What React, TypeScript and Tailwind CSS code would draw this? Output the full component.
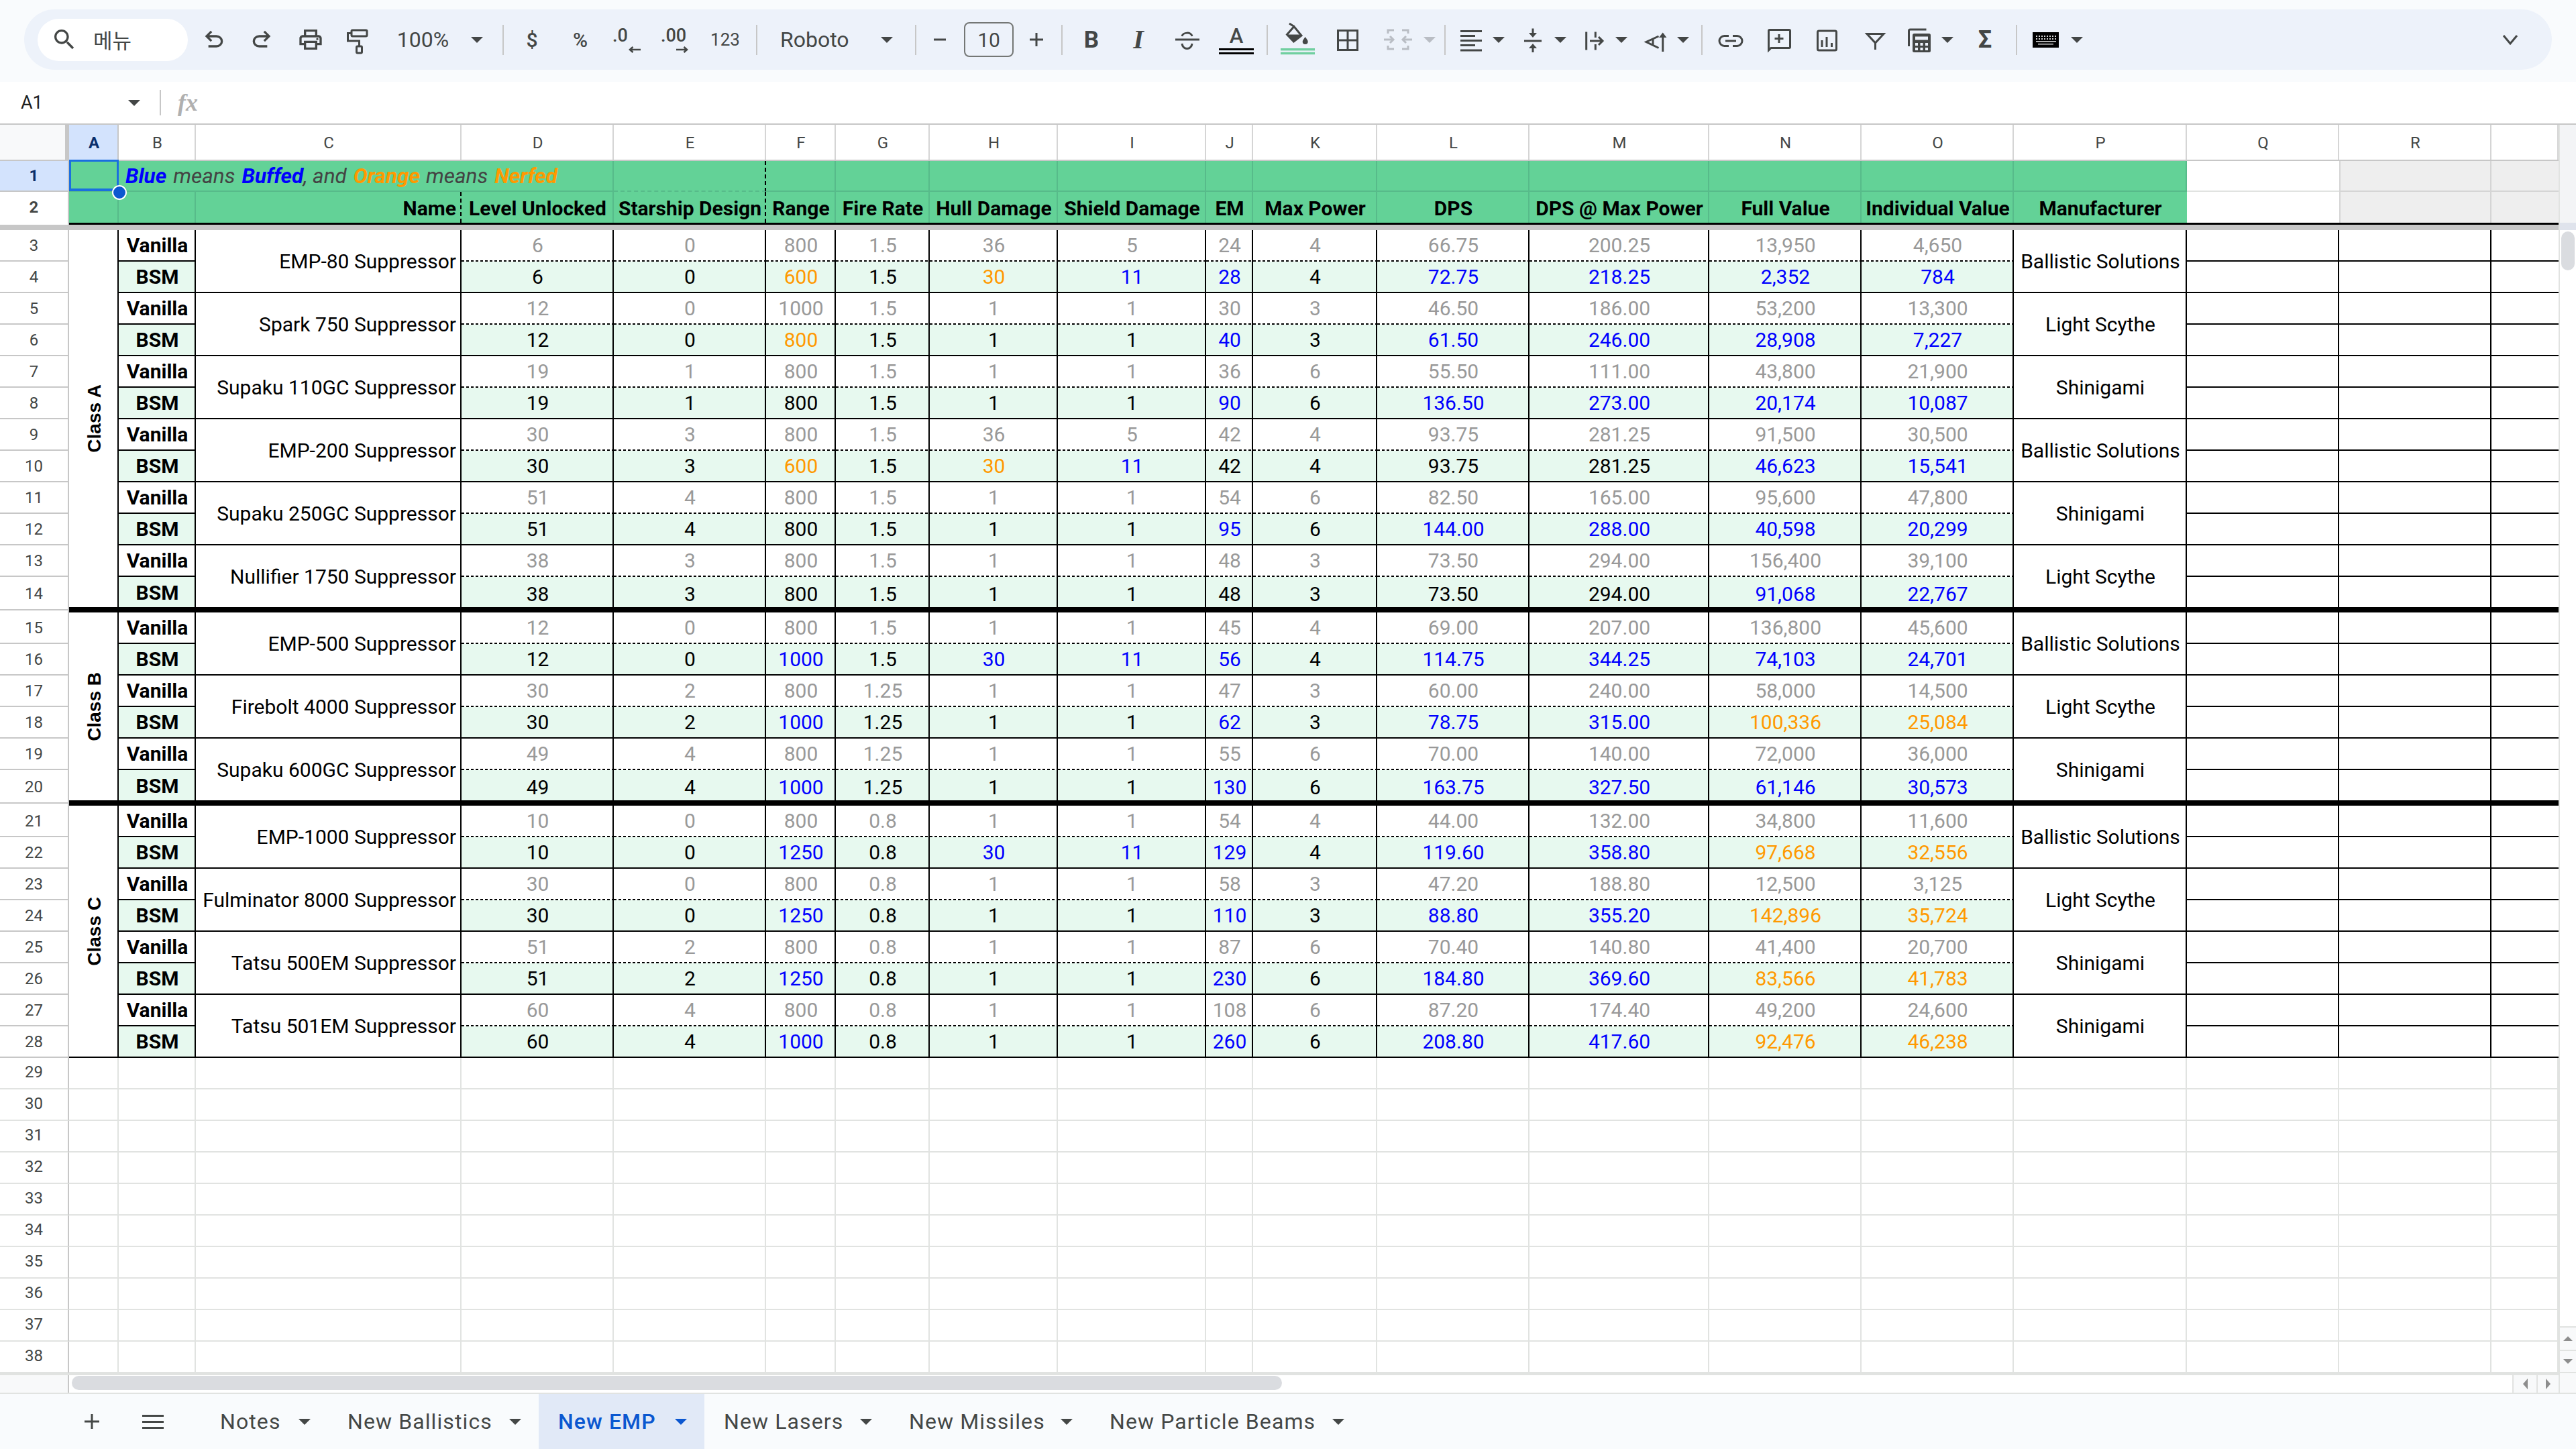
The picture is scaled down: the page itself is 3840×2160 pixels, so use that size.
import type { ReactNode } from "react";

const GRID =
  "grid grid-cols-[103px_74px_115px_396px_227px_227px_104px_140px_191px_221px_70px_185px_227px_268px_227px_227px_258px_227px_227px_100px]";

const COL_LETTERS = "ABCDEFGHIJKLMNOPQRS".split("");

const HEADERS = [
  "Level Unlocked",
  "Starship Design",
  "Range",
  "Fire Rate",
  "Hull Damage",
  "Shield Damage",
  "EM",
  "Max Power",
  "DPS",
  "DPS @ Max Power",
  "Full Value",
  "Individual Value",
];

// suffix b = blue (buffed), o = orange (nerfed)
const SECTIONS = [
  {
    label: "Class A",
    span: "row-span-12",
    items: [
      ["EMP-80 Suppressor", "Ballistic Solutions", "6 0 800 1.5 36 5 24 4 66.75 200.25 13,950 4,650", "6 0 600o 1.5 30o 11b 28b 4 72.75b 218.25b 2,352b 784b"],
      ["Spark 750 Suppressor", "Light Scythe", "12 0 1000 1.5 1 1 30 3 46.50 186.00 53,200 13,300", "12 0 800o 1.5 1 1 40b 3 61.50b 246.00b 28,908b 7,227b"],
      ["Supaku 110GC Suppressor", "Shinigami", "19 1 800 1.5 1 1 36 6 55.50 111.00 43,800 21,900", "19 1 800 1.5 1 1 90b 6 136.50b 273.00b 20,174b 10,087b"],
      ["EMP-200 Suppressor", "Ballistic Solutions", "30 3 800 1.5 36 5 42 4 93.75 281.25 91,500 30,500", "30 3 600o 1.5 30o 11b 42 4 93.75 281.25 46,623b 15,541b"],
      ["Supaku 250GC Suppressor", "Shinigami", "51 4 800 1.5 1 1 54 6 82.50 165.00 95,600 47,800", "51 4 800 1.5 1 1 95b 6 144.00b 288.00b 40,598b 20,299b"],
      ["Nullifier 1750 Suppressor", "Light Scythe", "38 3 800 1.5 1 1 48 3 73.50 294.00 156,400 39,100", "38 3 800 1.5 1 1 48 3 73.50 294.00 91,068b 22,767b"],
    ],
  },
  {
    label: "Class B",
    span: "row-span-6",
    items: [
      ["EMP-500 Suppressor", "Ballistic Solutions", "12 0 800 1.5 1 1 45 4 69.00 207.00 136,800 45,600", "12 0 1000b 1.5 30b 11b 56b 4 114.75b 344.25b 74,103b 24,701b"],
      ["Firebolt 4000 Suppressor", "Light Scythe", "30 2 800 1.25 1 1 47 3 60.00 240.00 58,000 14,500", "30 2 1000b 1.25 1 1 62b 3 78.75b 315.00b 100,336o 25,084o"],
      ["Supaku 600GC Suppressor", "Shinigami", "49 4 800 1.25 1 1 55 6 70.00 140.00 72,000 36,000", "49 4 1000b 1.25 1 1 130b 6 163.75b 327.50b 61,146b 30,573b"],
    ],
  },
  {
    label: "Class C",
    span: "row-span-8",
    items: [
      ["EMP-1000 Suppressor", "Ballistic Solutions", "10 0 800 0.8 1 1 54 4 44.00 132.00 34,800 11,600", "10 0 1250b 0.8 30b 11b 129b 4 119.60b 358.80b 97,668o 32,556o"],
      ["Fulminator 8000 Suppressor", "Light Scythe", "30 0 800 0.8 1 1 58 3 47.20 188.80 12,500 3,125", "30 0 1250b 0.8 1 1 110b 3 88.80b 355.20b 142,896o 35,724o"],
      ["Tatsu 500EM Suppressor", "Shinigami", "51 2 800 0.8 1 1 87 6 70.40 140.80 41,400 20,700", "51 2 1250b 0.8 1 1 230b 6 184.80b 369.60b 83,566o 41,783o"],
      ["Tatsu 501EM Suppressor", "Shinigami", "60 4 800 0.8 1 1 108 6 87.20 174.40 49,200 24,600", "60 4 1000b 0.8 1 1 260b 6 208.80b 417.60b 92,476o 46,238o"],
    ],
  },
];

const TABS = [
  { name: "Notes", w: "w-[190px]" },
  { name: "New Ballistics", w: "w-[314px]" },
  { name: "New EMP", w: "w-[247px]", active: true },
  { name: "New Lasers", w: "w-[276px]" },
  { name: "New Missiles", w: "w-[299px]" },
  { name: "New Particle Beams", w: "w-[405px]" },
];

function Box({ ml, children }: { ml: string; children: ReactNode }) {
  return <div className={`flex h-[44px] w-[44px] shrink-0 items-center justify-center ${ml}`}>{children}</div>;
}

function Caret({ ml = "", color = "fill-[#444746]" }: { ml?: string; color?: string }) {
  return (
    <svg viewBox="0 0 18 9" className={`h-[9px] w-[18px] shrink-0 ${color} ${ml}`}>
      <path d="M0 0h18L9 9z" />
    </svg>
  );
}

function Sep({ ml }: { ml: string }) {
  return <div className={`h-[45px] w-[2px] shrink-0 bg-[#c7c7c7] ${ml}`} />;
}

function Ico({ children, vb = "0 0 44 44" }: { children: ReactNode; vb?: string }) {
  return (
    <svg viewBox={vb} className="h-[44px] w-[44px] fill-none stroke-[#444746] stroke-[3]">
      {children}
    </svg>
  );
}

function Solid({ d, vb = "0 0 24 24" }: { d: string; vb?: string }) {
  return (
    <svg viewBox={vb} className="h-[40px] w-[40px] fill-[#444746]">
      <path d={d} />
    </svg>
  );
}

function DecimalIcon({ label, ml, arrowMl, dir }: { label: string; ml: string; arrowMl: string; dir: "l" | "r" }) {
  return (
    <div className={`flex w-[44px] shrink-0 flex-col items-start ${ml}`}>
      <div className="h-[26px] text-[27px] font-medium leading-[26px]">{label}</div>
      <svg viewBox="0 0 18 10" className={`mt-[3px] h-[10px] w-[18px] fill-none stroke-[#444746] stroke-[2.6] ${arrowMl}`}>
        {dir === "l" ? <path d="M18 5H2M6.5 1 2 5l4.5 4" /> : <path d="M0 5h16M11.5 1 16 5l-4.5 4" />}
      </svg>
    </div>
  );
}

function Toolbar() {
  return (
    <div className="h-[122px] shrink-0 bg-[#f9fbfd] px-[36px] pt-[14px]">
      <div className="flex h-[90px] items-center rounded-[45px] bg-[#edf2fa] pl-[20px] text-[#444746]">
        <div className="flex h-[63px] w-[224px] shrink-0 items-center rounded-[32px] bg-white pl-[20px]">
          <Solid d="M15.5 14h-.79l-.28-.27C15.41 12.59 16 11.11 16 9.5 16 5.91 13.09 3 9.5 3S3 5.91 3 9.5 5.91 16 9.5 16c1.61 0 3.09-.59 4.23-1.57l.27.28v.79l5 4.99L20.49 19l-4.99-5zm-6 0C7.01 14 5 11.99 5 9.5S7.01 5 9.5 5 14 7.01 14 9.5 11.99 14 9.5 14z" />
          <span className="ml-[23px] font-[family-name:'Noto_Sans_CJK_KR',sans-serif] text-[31px]">메뉴</span>
        </div>
        <Box ml="ml-[17px]">
          <Solid vb="0 -960 960 960" d="M280-200v-80h284q63 0 109.5-40T720-420q0-60-46.5-100T564-560H312l104 104-56 56-200-200 200-200 56 56-104 104h252q97 0 166.5 63T800-420q0 94-69.5 157T564-200H280Z" />
        </Box>
        <Box ml="ml-[27px]">
          <Solid vb="0 -960 960 960" d="M396-200q-97 0-166.5-63T160-420q0-94 69.5-157T396-640h252L544-744l56-56 200 200-200 200-56-56 104-104H396q-63 0-109.5 40T240-420q0 60 46.5 100T396-280h284v80H396Z" />
        </Box>
        <Box ml="ml-[29px]">
          <Solid d="M19 8h-1V3H6v5H5c-1.66 0-3 1.34-3 3v6h4v4h12v-4h4v-6c0-1.66-1.34-3-3-3zM8 5h8v3H8V5zm8 12v2H8v-4h8v2zm2-2v-2H6v2H4v-4c0-.55.45-1 1-1h14c.55 0 1 .45 1 1v4h-2zM18 10.5a1 1 0 1 0 0 2 1 1 0 0 0 0-2z" />
        </Box>
        <Box ml="ml-[25px]">
          <Ico>
            <rect x="14" y="8" width="23" height="9" rx="1.5" />
            <path d="M14 12.5H8.5V24H25.5V32" />
            <rect x="21.5" y="32" width="8" height="10" rx="1.5" />
          </Ico>
        </Box>
        <div className="ml-[36px] w-[81px] shrink-0 text-center text-[32px] leading-none">100%</div>
        <Caret ml="ml-[31px]" />
        <Sep ml="ml-[29px]" />
        <div className="ml-[27px] w-[30px] shrink-0 text-center text-[30px] font-medium">$</div>
        <div className="ml-[32px] w-[50px] shrink-0 text-center text-[30px] font-medium">%</div>
        <DecimalIcon label=".0" ml="ml-[23px]" arrowMl="ml-[24px]" dir="l" />
        <DecimalIcon label=".00" ml="ml-[28px]" arrowMl="ml-[23px]" dir="r" />
        <div className="ml-[27px] w-[50px] shrink-0 text-center text-[26px]">123</div>
        <Sep ml="ml-[21px]" />
        <div className="ml-[34px] w-[106px] shrink-0 text-[32px] leading-none">Roboto</div>
        <Caret ml="ml-[44px]" />
        <Sep ml="ml-[33px]" />
        <svg viewBox="0 0 30 30" className="ml-[20px] h-[30px] w-[30px] shrink-0 stroke-[#444746] stroke-[3]">
          <path d="M6 15h18" />
        </svg>
        <div className="ml-[21px] flex h-[52px] w-[74px] shrink-0 items-center justify-center rounded-[8px] border-2 border-[#747775] text-[30px]">10</div>
        <svg viewBox="0 0 30 30" className="ml-[19px] h-[30px] w-[30px] shrink-0 stroke-[#444746] stroke-[3]">
          <path d="M5 15h20M15 5v20" />
        </svg>
        <Sep ml="ml-[22px]" />
        <Box ml="ml-[21px]">
          <span className="text-[35px] font-bold leading-none">B</span>
        </Box>
        <Box ml="ml-[26px]">
          <span className="font-[family-name:'Liberation_Serif',serif] text-[40px] font-bold italic leading-none">I</span>
        </Box>
        <Box ml="ml-[28px]">
          <Ico>
            <path d="M5 22h36M15 17c1-6 14-7 15 0M15 28c1 10 14 10 15 0" />
          </Ico>
        </Box>
        <div className="ml-[26px] flex w-[52px] shrink-0 flex-col items-center">
          <span className="h-[34px] text-[31px] font-medium leading-[34px]">A</span>
          <div className="mt-[1px] h-[3px] w-full bg-black" />
          <div className="mt-[3px] h-[3px] w-full bg-black" />
        </div>
        <Sep ml="ml-[19px]" />
        <svg viewBox="0 0 51 58" className="ml-[19px] h-[58px] w-[51px] shrink-0">
          <path d="M13 5l7 4.5M20 9.5 9.5 21.5 19.5 32 31 23z" className="fill-none stroke-[#444746] stroke-[3]" />
          <path d="M10 21.5h20.5L19.5 32z" className="fill-[#444746]" />
          <path d="M36.7 25c-2 3-4 5-4 7a4 4 0 0 0 8 0c0-2-2-4-4-7z" className="fill-[#444746]" />
          <rect x="0" y="42" width="51" height="3.4" className="fill-[#71cfa0]" />
          <rect x="0" y="47.8" width="51" height="3.4" className="fill-[#71cfa0]" />
        </svg>
        <Box ml="ml-[27px]">
          <Ico>
            <path d="M7.5 8.5h29v29h-29zM22 8.5v29M7.5 23h29" />
          </Ico>
        </Box>
        <Box ml="ml-[31px]">
          <svg viewBox="0 0 44 44" className="h-[44px] w-[44px] fill-none stroke-[#b9bdc4] stroke-[3]">
            <path d="M7 13V8h9M28 8h9v5M7 31v5h9M28 36h9v-5M1 22h14M10 17l5 5-5 5M43 22H29M34 17l-5 5 5 5" />
          </svg>
        </Box>
        <Caret ml="ml-[16px]" color="fill-[#b9bdc4]" />
        <Sep ml="ml-[13px]" />
        <Box ml="ml-[16px]">
          <Ico>
            <path d="M6 9.5h32M6 16.5h22M6 23.5h32M6 30.5h22M6 38h32" />
          </Ico>
        </Box>
        <Caret ml="ml-[10px]" />
        <Box ml="ml-[20px]">
          <Ico>
            <path d="M9 24h26M22 5.5v10M22 31v10" />
            <path d="M16 12h12l-6 7zM16 35h12l-6-7z" className="fill-[#444746] stroke-none" />
          </Ico>
        </Box>
        <Caret ml="ml-[10px]" />
        <Box ml="ml-[20px]">
          <Ico>
            <path d="M9.7 10.5v27M23.3 10.5V19M23.3 29v8.5M15 24h18M28 18l6 6-6 6" />
          </Ico>
        </Box>
        <Caret ml="ml-[9px]" />
        <Box ml="ml-[19px]">
          <Ico>
            <path d="M27.5 17 9 25.5l18.5 9M19 21v9M33.7 40V13" />
            <path d="M28 19l5.7-7.5L39.4 19z" className="fill-[#444746] stroke-none" />
          </Ico>
        </Box>
        <Caret ml="ml-[11px]" />
        <Sep ml="ml-[18px]" />
        <Box ml="ml-[20px]">
          <Ico>
            <path d="M19 16.5h-6.5a7.5 7.5 0 0 0 0 15H19M25 16.5h6.5a7.5 7.5 0 0 1 0 15H25M14 24h16" />
          </Ico>
        </Box>
        <Box ml="ml-[28px]">
          <Ico>
            <path d="M6.5 38V9a1.5 1.5 0 0 1 1.5-1.5h29A1.5 1.5 0 0 1 38.5 9v24a1.5 1.5 0 0 1-1.5 1.5H10z" />
            <path d="M22 14v13M15.5 20.5h13" />
          </Ico>
        </Box>
        <Box ml="ml-[27px]">
          <Ico>
            <rect x="8.5" y="9" width="28" height="29" rx="2" />
            <path d="M15 23v10M22 18v15M29.5 27v6" />
          </Ico>
        </Box>
        <Box ml="ml-[28px]">
          <Ico>
            <path d="M10 13.5h25L22.5 27zM22.5 27v10" />
          </Ico>
        </Box>
        <Box ml="ml-[22px]">
          <Ico>
            <path d="M6.5 32V9a2 2 0 0 1 2-2h24" />
            <rect x="12" y="13" width="27" height="28" rx="2.5" className="fill-[#444746] stroke-none" />
            <rect x="16" y="17.5" width="19" height="5" className="fill-[#edf2fa] stroke-none" />
            <path d="M16 27h4v4h-4zM23.5 27h4v4h-4zM31 27h4v4h-4zM16 34h4v4h-4zM23.5 34h4v4h-4zM31 34h4v4h-4z" className="fill-[#edf2fa] stroke-none" />
          </Ico>
        </Box>
        <Caret ml="ml-[11px]" />
        <Box ml="ml-[25px]">
          <span className="text-[36px] font-bold leading-none">Σ</span>
        </Box>
        <Sep ml="ml-[24px]" />
        <svg viewBox="0 0 39 23" className="ml-[23px] h-[23px] w-[39px] shrink-0">
          <rect width="39" height="23" className="fill-black" />
          <path d="M5 5h2v2H5zM9 5h2v2H9zM13 5h2v2h-2zM17 5h2v2h-2zM21 5h2v2h-2zM25 5h2v2h-2zM29 5h2v2h-2zM33 5h2v2h-2zM5 9h2v2H5zM9 9h2v2H9zM13 9h2v2h-2zM17 9h2v2h-2zM21 9h2v2h-2zM25 9h2v2h-2zM29 9h2v2h-2zM33 9h2v2h-2zM5 13h30v1.5H5zM8 17h23v1.5H8z" className="fill-[#d8d8d8]" />
        </svg>
        <Caret ml="ml-[18px]" />
        <svg viewBox="0 0 24 16" className="ml-auto mr-[50px] h-[16px] w-[24px] shrink-0 fill-none stroke-[#444746] stroke-[3]">
          <path d="M2 2l10 12L22 2" />
        </svg>
      </div>
    </div>
  );
}

function FormulaBar() {
  return (
    <div className="flex h-[64px] shrink-0 items-center border-b-2 border-[#c7c7c7] bg-white">
      <div className="ml-[31px] w-[160px] text-[27px] text-[#1f1f1f]">A1</div>
      <Caret />
      <div className="ml-[29px] h-[38px] w-[2px] bg-[#c7c7c7]" />
      <span className="ml-[25px] font-[family-name:'Liberation_Serif',serif] text-[36px] font-bold italic text-[#b0b0b0]">fx</span>
    </div>
  );
}

function ColumnHeaders() {
  return (
    <div className={`${GRID} h-[54px] border-b-2 border-[#c7c7c7]`}>
      <div className="border-r-[6px] border-[#c7c7c7] bg-[#f8f9fa]" />
      {COL_LETTERS.map((c) => (
        <div
          key={c}
          className={`flex items-center justify-center border-r-2 pl-[2px] pt-[1px] text-[24px] ${
            c === "A" ? "border-[#c7c7c7] bg-[#d3e3fd] font-bold text-[#0b2f6b]" : "border-[#d5d5d5] bg-white text-[#444746]"
          }`}
        >
          {c === "S" ? "" : c}
        </div>
      ))}
    </div>
  );
}

function RowHead({ n, active, bottom = true, low }: { n: number; active?: boolean; bottom?: boolean; low?: boolean }) {
  return (
    <div
      className={`flex items-center justify-center border-r-2 border-[#c7c7c7] text-[24px] ${bottom ? "border-b-2" : ""} ${low ? "pt-[2px]" : ""} ${
        active ? "bg-[#d3e3fd] font-bold text-[#0b2f6b]" : "bg-white text-[#444746]"
      }`}
    >
      {n}
    </div>
  );
}

function FrozenRows() {
  const green = "border-r-2 border-b-2 border-[#57bb8a] bg-[#63d297]";
  return (
    <div className="shrink-0">
      <div className={`${GRID} auto-rows-[46px] text-[30px] font-bold text-black`}>
        <RowHead n={1} active />
        <div className={`${green} relative`}>
          <div className="absolute -bottom-[1px] -right-[2px] -top-[2px] left-0 z-10 border-[3px] border-b-4 border-[#1a6fe0]" />
          <div className="absolute -bottom-[14px] -right-[14px] z-20 h-[22px] w-[22px] rounded-full border-2 border-white bg-[#0b57d0]" />
        </div>
        <div className={`${green} col-span-3 flex items-center pl-[10px] pt-[2px] text-[31.5px] font-normal italic text-[#434343]`}>
          <b className="text-[#0000ff]">Blue</b>
          <span className="ml-[10px]">means</span>
          <b className="ml-[10px] text-[#0000ff]">Buffed</b>
          <span>, and</span>
          <b className="ml-[10px] text-[#ff9900]">Orange</b>
          <span className="ml-[9px]">means</span>
          <b className="ml-[10px] text-[#ff9900]">Nerfed</b>
        </div>
        <div className="border-b-2 border-r-2 border-dashed border-b-[#57bb8a] border-r-black bg-[#63d297]" />
        {COL_LETTERS.slice(5, 16).map((c) => (
          <div key={c} className={green} />
        ))}
        <div className="border-b-2 border-[#e1e3e1] bg-white" />
        <div className="border-b-2 border-l-2 border-r-2 border-[#d5d5d5] bg-[#eeeeee]" />
        <div className="border-b-2 border-[#d5d5d5] bg-[#eeeeee]" />

        <RowHead n={2} bottom={false} />
        <div className="border-r-2 border-[#57bb8a] bg-[#63d297]" />
        <div className="border-r-2 border-[#57bb8a] bg-[#63d297]" />
        <div className="flex items-center justify-end border-r-2 border-dashed border-black bg-[#63d297] pr-[6px] pt-[3px]">Name</div>
        {HEADERS.map((h, i) => (
          <div
            key={h}
            className={`flex items-center justify-center whitespace-nowrap border-r-2 bg-[#63d297] pl-[2px] pt-[3px] ${
              i === 1 ? "border-dashed border-black" : "border-[#57bb8a]"
            }`}
          >
            {h}
          </div>
        ))}
        <div className="flex items-center justify-center bg-[#63d297] pt-[3px]">Manufacturer</div>
        <div className="bg-white" />
        <div className="border-l-2 border-r-2 border-[#d5d5d5] bg-[#eeeeee]" />
        <div className="bg-[#eeeeee]" />
      </div>
      <div className="flex h-[3px]">
        <div className="w-[103px] border-r-2 border-[#c7c7c7] bg-white" />
        <div className="flex-1 bg-black" />
      </div>
      <div className="h-[8px] bg-[#c7c7c7]" />
    </div>
  );
}

function Num({ value, vanilla, low }: { value: string; vanilla: boolean; low: boolean }) {
  const suffix = value.slice(-1);
  const color = vanilla ? "text-[#999999]" : suffix === "b" ? "text-[#0000ff]" : suffix === "o" ? "text-[#ff9900]" : "text-black";
  const text = suffix === "b" || suffix === "o" ? value.slice(0, -1) : value;
  return (
    <div
      className={`flex items-center justify-center border-r-2 border-black pl-[2px] ${color} ${
        vanilla
          ? "bg-white bg-[image:repeating-linear-gradient(90deg,#000_0_4px,transparent_4px_7px)] bg-[length:100%_2px] bg-bottom bg-no-repeat pb-[2px]"
          : "border-b-2 bg-[#e7f9ef]"
      } ${low ? "pt-[5px]" : ""}`}
    >
      {text}
    </div>
  );
}

function BlankTail() {
  return (
    <>
      <div className="border-r-2 border-b-2 border-black" />
      <div className="border-r-2 border-b-2 border-black" />
      <div className="border-b-2 border-black" />
    </>
  );
}

function Body() {
  let row = 3;
  return (
    <div className="shrink-0 text-[30px] text-black">
      {SECTIONS.map((section, s) => {
        const lastSection = s === SECTIONS.length - 1;
        const rows: ReactNode[] = [];
        section.items.forEach((item, i) => {
          const [name, maker, vanilla, bsm] = item;
          const lastItem = i === section.items.length - 1;
          const low = lastItem && !lastSection;
          rows.push(
            <RowHead key={row} n={row} />,
            i === 0 && (
              <div
                key={section.label}
                className={`${section.span} flex items-center justify-center border-r-2 border-b-2 border-r-black border-b-black bg-white pl-[3px]`}
              >
                <span className="rotate-180 font-[family-name:'Liberation_Sans',sans-serif] text-[28px] font-bold [writing-mode:vertical-rl]">
                  {section.label}
                </span>
              </div>
            ),
            <div key={`${row}b`} className="flex items-center justify-center border-r-2 border-b-2 border-black bg-white pl-[2px] font-bold">
              Vanilla
            </div>,
            <div key={`${row}c`} className="row-span-2 flex items-center justify-end border-r-2 border-b-2 border-black bg-white pr-[6px]">
              {name}
            </div>,
            ...vanilla.split(" ").map((v, c) => <Num key={`${row}v${c}`} value={v} vanilla low={false} />),
            <div key={`${row}p`} className="row-span-2 flex items-center justify-center border-r-2 border-b-2 border-black bg-white pl-[2px]">
              {maker}
            </div>,
            <BlankTail key={`${row}t`} />,
          );
          row += 1;
          rows.push(
            <RowHead key={row} n={row} bottom={!low} low={low} />,
            <div
              key={`${row}b`}
              className={`flex items-center justify-center border-r-2 border-b-2 border-black bg-[#e7f9ef] pl-[2px] font-bold ${low ? "pt-[1px]" : ""}`}
            >
              BSM
            </div>,
            ...bsm.split(" ").map((v, c) => <Num key={`${row}v${c}`} value={v} vanilla={false} low={low} />),
            <BlankTail key={`${row}t`} />,
          );
          row += 1;
        });
        return (
          <div key={section.label}>
            <div className={`${GRID} auto-rows-[47px]`}>{rows}</div>
            {!lastSection && (
              <div className="flex h-[6px]">
                <div className="w-[103px] border-r-2 border-[#c7c7c7] bg-white">
                  <div className="mt-[1px] h-[2px] bg-[#c7c7c7]" />
                </div>
                <div className="-mt-[2px] h-[8px] flex-1 bg-black" />
              </div>
            )}
          </div>
        );
      })}
    </div>
  );
}

function EmptyRows() {
  const nums = Array.from({ length: 10 }, (_, i) => 29 + i);
  return (
    <div className={`${GRID} shrink-0 auto-rows-[47px]`}>
      {nums.map((n) => (
        <div key={n} className="contents">
          <div className="flex items-center justify-center border-r-2 border-b-2 border-r-[#c7c7c7] border-b-[#e1e3e1] bg-white pb-[3px] text-[24px] text-[#444746]">
            {n}
          </div>
          {COL_LETTERS.map((c) => (
            <div key={c} className="border-r-2 border-b-2 border-[#e1e3e1] bg-white" />
          ))}
        </div>
      ))}
    </div>
  );
}

function HScroll() {
  return (
    <div className="flex h-[29px] shrink-0 border-t-[3px] border-[#e1e3e1] bg-white">
      <div className="w-[103px] border-r-2 border-[#c7c7c7] bg-[#f8f9fa]" />
      <div className="ml-[4px] mt-[1px] h-[21px] w-[1804px] rounded-full bg-[#dadce0]" />
      <div className="ml-auto flex">
        <div className="flex w-[36px] items-center justify-center border-l-2 border-[#e1e3e1] bg-[#f8f9fa]">
          <div className="h-0 w-0 border-y-[8px] border-r-[7px] border-y-transparent border-r-[#8d8d8d]" />
        </div>
        <div className="flex w-[33px] items-center justify-center border-l-2 border-[#e1e3e1] bg-[#f8f9fa]">
          <div className="h-0 w-0 border-y-[8px] border-l-[7px] border-y-transparent border-l-[#8d8d8d]" />
        </div>
      </div>
    </div>
  );
}

function VScroll() {
  return (
    <div className="flex w-[26px] shrink-0 flex-col border-l-2 border-[#e1e3e1] bg-white">
      <div className="h-[146px] bg-[#f3f4f6]" />
      <div className="h-[11px] bg-[#dfe3ec]" />
      <div className="ml-[2px] mt-[2px] h-[58px] w-[20px] rounded-full bg-[#dadce0]" />
      <div className="flex-1" />
      <div className="flex h-[35px] items-center justify-center border-t-2 border-[#e1e3e1] bg-[#f8f9fa]">
        <div className="h-0 w-0 border-x-[7px] border-b-[7px] border-x-transparent border-b-[#8d8d8d]" />
      </div>
      <div className="flex h-[35px] items-center justify-center border-y-2 border-[#e1e3e1] bg-[#f8f9fa]">
        <div className="h-0 w-0 border-x-[7px] border-t-[7px] border-x-transparent border-t-[#8d8d8d]" />
      </div>
      <div className="h-[29px] bg-[#f8f9fa]" />
    </div>
  );
}

function TabBar() {
  return (
    <div className="flex h-[84px] shrink-0 items-stretch border-t-2 border-[#e1e3e1] bg-[#f9fbfd] text-[32px] text-[#444746]">
      <div className="flex items-center pl-[125px]">
        <svg viewBox="0 0 24 24" className="h-[24px] w-[24px] stroke-[#444746] stroke-[3]">
          <path d="M1 12h22M12 1v22" />
        </svg>
        <div className="ml-[63px] flex w-[32px] flex-col gap-[6px]">
          <div className="h-[3px] bg-[#444746]" />
          <div className="h-[3px] bg-[#444746]" />
          <div className="h-[3px] bg-[#444746]" />
        </div>
      </div>
      <div className="ml-[55px] flex">
        {TABS.map((t) => (
          <div
            key={t.name}
            className={`flex items-center pl-[29px] pr-[26px] ${t.w} ${t.active ? "bg-[#e1e9f7] font-medium text-[#0b57d0]" : ""}`}
          >
            <span className="tracking-[1.1px]">{t.name}</span>
            <Caret ml="ml-auto" color={t.active ? "fill-[#0b57d0]" : "fill-[#444746]"} />
          </div>
        ))}
      </div>
    </div>
  );
}

export default function App() {
  return (
    <div className="flex h-[2160px] w-[3840px] flex-col overflow-hidden bg-white font-[family-name:Roboto,sans-serif]">
      <Toolbar />
      <FormulaBar />
      <div className="flex min-h-0 flex-1">
        <div className="flex w-[3814px] shrink-0 flex-col">
          <ColumnHeaders />
          <FrozenRows />
          <Body />
          <EmptyRows />
          <HScroll />
        </div>
        <VScroll />
      </div>
      <TabBar />
    </div>
  );
}
